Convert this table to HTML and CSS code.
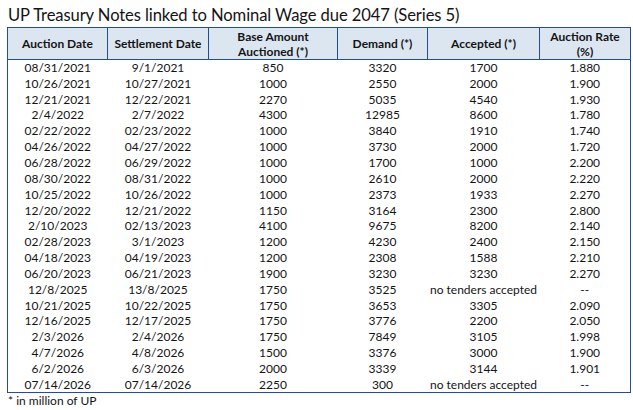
FILE: index.html
```html
<!DOCTYPE html>
<html>
<head>
<meta charset="utf-8">
<link rel="stylesheet" href="styles.css">
</head>
<body>
<div class="page">
  <h1 class="title">UP Treasury Notes linked to Nominal Wage due 2047 (Series 5)</h1>
  <table class="notes">
    <colgroup>
      <col class="c1"><col class="c2"><col class="c3"><col class="c4"><col class="c5"><col class="c6">
    </colgroup>
    <thead>
      <tr>
        <th>Auction Date</th>
        <th>Settlement Date</th>
        <th>Base Amount<br>Auctioned (*)</th>
        <th>Demand (*)</th>
        <th>Accepted (*)</th>
        <th>Auction Rate<br>(%)</th>
      </tr>
    </thead>
    <tbody>
      <tr><td>08/31/2021</td><td>9/1/2021</td><td>850</td><td>3320</td><td>1700</td><td>1.880</td></tr>
      <tr><td>10/26/2021</td><td>10/27/2021</td><td>1000</td><td>2550</td><td>2000</td><td>1.900</td></tr>
      <tr><td>12/21/2021</td><td>12/22/2021</td><td>2270</td><td>5035</td><td>4540</td><td>1.930</td></tr>
      <tr><td>2/4/2022</td><td>2/7/2022</td><td>4300</td><td>12985</td><td>8600</td><td>1.780</td></tr>
      <tr><td>02/22/2022</td><td>02/23/2022</td><td>1000</td><td>3840</td><td>1910</td><td>1.740</td></tr>
      <tr><td>04/26/2022</td><td>04/27/2022</td><td>1000</td><td>3730</td><td>2000</td><td>1.720</td></tr>
      <tr><td>06/28/2022</td><td>06/29/2022</td><td>1000</td><td>1700</td><td>1000</td><td>2.200</td></tr>
      <tr><td>08/30/2022</td><td>08/31/2022</td><td>1000</td><td>2610</td><td>2000</td><td>2.220</td></tr>
      <tr><td>10/25/2022</td><td>10/26/2022</td><td>1000</td><td>2373</td><td>1933</td><td>2.270</td></tr>
      <tr><td>12/20/2022</td><td>12/21/2022</td><td>1150</td><td>3164</td><td>2300</td><td>2.800</td></tr>
      <tr><td>2/10/2023</td><td>02/13/2023</td><td>4100</td><td>9675</td><td>8200</td><td>2.140</td></tr>
      <tr><td>02/28/2023</td><td>3/1/2023</td><td>1200</td><td>4230</td><td>2400</td><td>2.150</td></tr>
      <tr><td>04/18/2023</td><td>04/19/2023</td><td>1200</td><td>2308</td><td>1588</td><td>2.210</td></tr>
      <tr><td>06/20/2023</td><td>06/21/2023</td><td>1900</td><td>3230</td><td>3230</td><td>2.270</td></tr>
      <tr><td>12/8/2025</td><td>13/8/2025</td><td>1750</td><td>3525</td><td>no tenders accepted</td><td>--</td></tr>
      <tr><td>10/21/2025</td><td>10/22/2025</td><td>1750</td><td>3653</td><td>3305</td><td>2.090</td></tr>
      <tr><td>12/16/2025</td><td>12/17/2025</td><td>1750</td><td>3776</td><td>2200</td><td>2.050</td></tr>
      <tr><td>2/3/2026</td><td>2/4/2026</td><td>1750</td><td>7849</td><td>3105</td><td>1.998</td></tr>
      <tr><td>4/7/2026</td><td>4/8/2026</td><td>1500</td><td>3376</td><td>3000</td><td>1.900</td></tr>
      <tr><td>6/2/2026</td><td>6/3/2026</td><td>2000</td><td>3339</td><td>3144</td><td>1.901</td></tr>
      <tr><td>07/14/2026</td><td>07/14/2026</td><td>2250</td><td>300</td><td>no tenders accepted</td><td>--</td></tr>
    </tbody>
  </table>
  <p class="note">* in million of UP</p>
</div>
</body>
</html>
```

FILE: styles.css
```css
html, body {
  margin: 0;
  padding: 0;
  background: #ffffff;
}

.page {
  padding: 4px 0 0 7px;
  font-family: "Lato", "Open Sans", sans-serif;
  color: #141414;
}

.title {
  margin: 0 0 0 1px;
  font-size: 16.6px;
  font-weight: 400;
  line-height: 22px;
  height: 23px;
  letter-spacing: -0.1px;
  white-space: nowrap;
}

.notes {
  border-collapse: collapse;
  table-layout: fixed;
  width: 623px;
  border: 1px solid #1f4e9c;
  font-size: 12px;
}

.c1 { width: 100px; }
.c2 { width: 101px; }
.c3 { width: 129px; }
.c4 { width: 90px; }
.c5 { width: 112px; }
.c6 { width: 91px; }

.notes th {
  background: #dce6f1;
  border: 1px solid #1f4e9c;
  font-weight: 700;
  height: 32px;
  box-sizing: border-box;
  padding: 0;
  line-height: 15px;
  text-align: center;
  vertical-align: middle;
}

.notes td {
  height: 15.85px;
  box-sizing: border-box;
  padding: 0;
  line-height: 13px;
  text-align: center;
  vertical-align: middle;
  white-space: nowrap;
}

.note {
  margin: 0 0 0 1px;
  font-size: 12px;
  line-height: 14px;
  padding-top: 1px;
}
```
